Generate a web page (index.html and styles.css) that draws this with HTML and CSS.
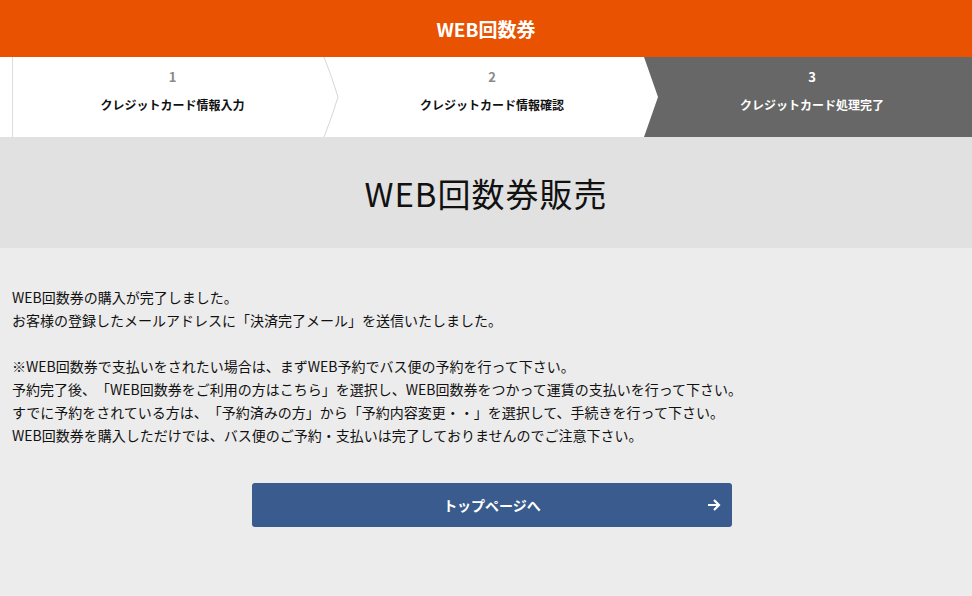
FILE: index.html
```html
<!DOCTYPE html>
<html lang="ja">

<head>
  <meta charset="utf-8">
  <title>WEB回数券販売</title>
  <link rel="stylesheet" href="styles.css">
</head>

<body>
  <header class="site-header">WEB回数券</header>

  <!-- 手続きのステップ -->
  <div class="steps">
    <div class="step">
      <span class="num">1</span>
      <span class="label">クレジットカード情報入力</span>
      <svg class="sep" width="18" height="80" viewBox="0 0 18 80">
        <path d="M2 0 Q10 20 16 40 Q10 60 2 80" fill="none" stroke="#d6d6d6" stroke-width="1"/>
      </svg>
    </div>
    <div class="step">
      <span class="num">2</span>
      <span class="label">クレジットカード情報確認</span>
    </div>
    <div class="step current">
      <span class="num">3</span>
      <span class="label">クレジットカード処理完了</span>
    </div>
  </div>

  <div class="title-band">
    <h1>WEB回数券販売</h1>
  </div>

  <div class="content">
    <p>WEB回数券の購入が完了しました。<br>
      お客様の登録したメールアドレスに「決済完了メール」を送信いたしました。</p>
    <p>※WEB回数券で支払いをされたい場合は、まずWEB予約でバス便の予約を行って下さい。<br>
      予約完了後、「WEB回数券をご利用の方はこちら」を選択し、WEB回数券をつかって運賃の支払いを行って下さい。<br>
      すでに予約をされている方は、「予約済みの方」から「予約内容変更・・」を選択して、手続きを行って下さい。<br>
      WEB回数券を購入しただけでは、バス便のご予約・支払いは完了しておりませんのでご注意下さい。</p>

    <a class="btn-top" href="#">
      <span>トップページへ</span>
      <svg class="arrow" width="14" height="12" viewBox="0 0 14 12">
        <path d="M1 6 H12 M7 1 L12 6 L7 11" fill="none" stroke="#fff" stroke-width="2.2"/>
      </svg>
    </a>
  </div>
</body>
</html>
```

FILE: styles.css
```css
html, body {
  margin: 0;
  padding: 0;
}
body {
  background-color: #ececec;
  font-family: "Noto Sans CJK JP", "Noto Sans", sans-serif;
  color: #111;
  min-height: 596px;
  text-spacing-trim: space-all;
}

.site-header {
  height: 57px;
  background-color: #e85200;
  color: #fff;
  font-size: 19px;
  font-weight: bold;
  line-height: 57px;
  text-align: center;
}

.steps {
  display: flex;
  height: 80px;
  padding-left: 12px;
  background-color: #fff;
}
.step {
  position: relative;
  width: 320px;
  display: flex;
  flex-direction: column;
  align-items: center;
  background-color: #fff;
}
.step:first-child {
  border-left: 1px solid #dcdcdc;
  width: 319px;
}
.step .num {
  margin-top: 10px;
  font-size: 13px;
  font-weight: bold;
  color: #8a8a8a;
  line-height: 20px;
}
.step .label {
  margin-top: 8px;
  font-size: 12px;
  font-weight: bold;
  line-height: 20px;
}
.step .sep {
  position: absolute;
  top: 0;
  right: -8px;
  z-index: 1;
}
.step.current {
  flex: 1;
  margin-left: -8px;
  padding-left: 8px;
  background-color: #666766;
  clip-path: polygon(0 0, 100% 0, 100% 100%, 0 100%, 14px 50%);
}
.step.current .num,
.step.current .label {
  color: #fff;
}

.title-band {
  height: 111px;
  background-color: #e1e1e1;
  display: flex;
  align-items: center;
  justify-content: center;
}
.title-band h1 {
  margin: 0;
  font-size: 33px;
  font-weight: normal;
  letter-spacing: 1px;
  color: #111;
}

.content {
  padding: 38px 12px 40px;
  font-size: 14px;
  line-height: 23px;
}
.content p {
  margin: 0 0 23px;
}
.content p:last-of-type {
  margin-bottom: 36px;
}

.btn-top {
  position: relative;
  display: flex;
  align-items: center;
  justify-content: center;
  width: 480px;
  height: 44px;
  margin-left: 240px;
  background-color: #3a5b8e;
  border-radius: 3px;
  color: #fff;
  font-size: 14px;
  font-weight: bold;
  text-decoration: none;
}
.btn-top .arrow {
  position: absolute;
  right: 11px;
  top: 16px;
}
```
